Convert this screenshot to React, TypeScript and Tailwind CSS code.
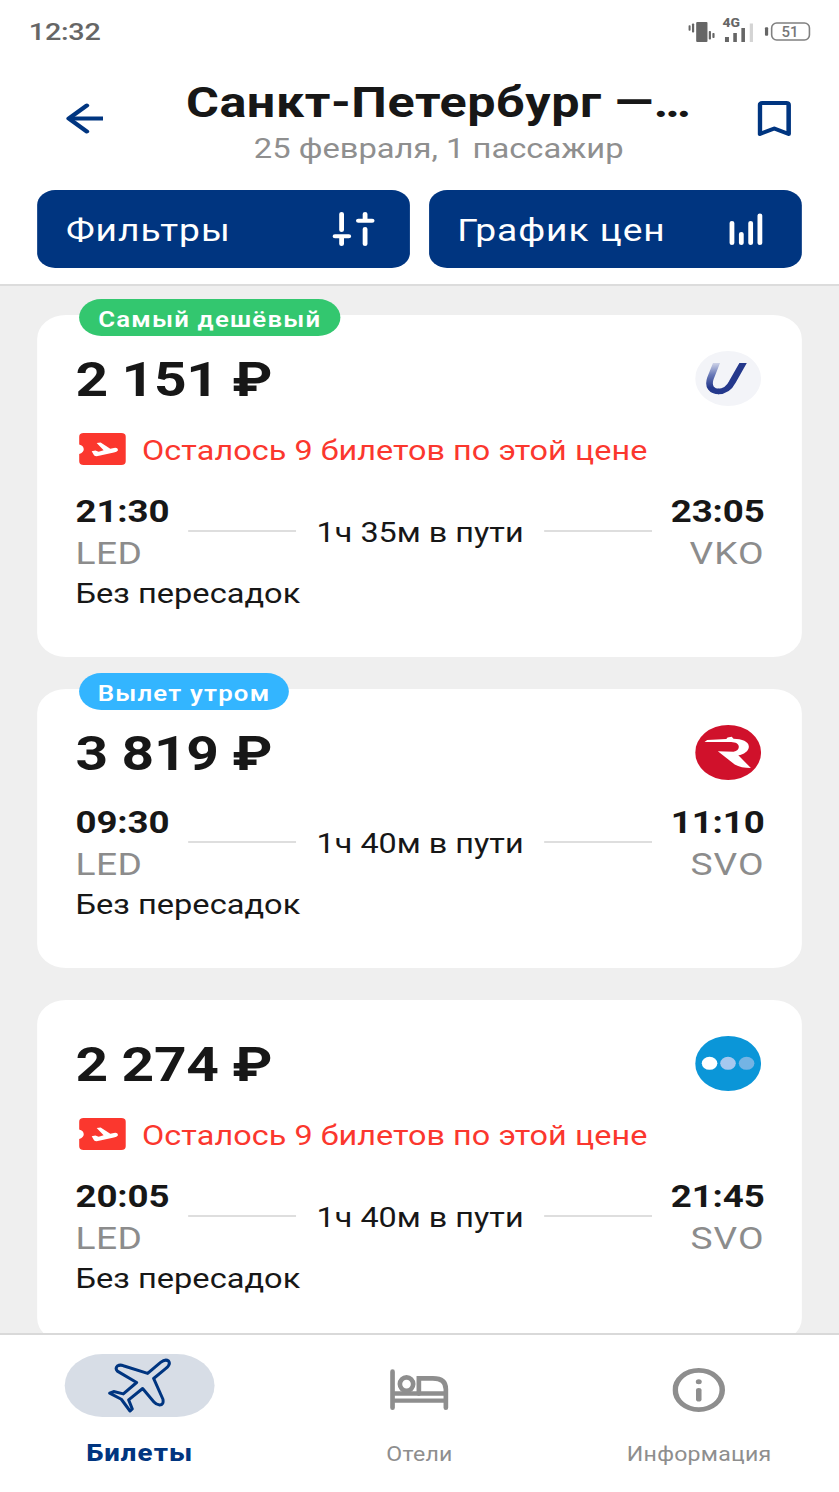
import type { ReactNode } from "react";
import clsx from "clsx";

type Flight = {
  id: number;
  price: string;
  badge?: { label: string; className: string };
  warning?: string;
  departure: string;
  arrival: string;
  from: string;
  to: string;
  duration: string;
  stops: string;
  logo: ReactNode;
};

function UtairLogo() {
  return (
    <svg viewBox="0 0 55 55" className="size-[55px]">
      <defs>
        <linearGradient id="utair" gradientUnits="userSpaceOnUse" x1="18" y1="10" x2="20" y2="36">
          <stop offset="0" stopColor="#dfe2f0" />
          <stop offset="0.5" stopColor="#6c7cb9" />
          <stop offset="1" stopColor="#24388c" />
        </linearGradient>
        <clipPath id="utair-top">
          <rect x="0" y="12" width="55" height="43" />
        </clipPath>
      </defs>
      <circle cx="27.5" cy="27.5" r="27.5" fill="#f3f4f8" />
      <g clipPath="url(#utair-top)" fill="none" strokeWidth="5.6">
        <path d="M18.8 9L12.8 27C10.2 36 14 40.5 20 40.5" stroke="url(#utair)" />
        <path d="M19 40.5C25 40.5 28.5 37 31 31L41.4 9" stroke="#24388c" />
      </g>
    </svg>
  );
}

function RossiyaLogo() {
  return (
    <svg viewBox="0 0 55 55" className="size-[55px]">
      <circle cx="27.5" cy="27.5" r="27.5" fill="#d0112b" />
      <path
        fill="#fff"
        d="M7.8 17L10 15L26 14L27 12.6L30.5 11.7L32 13.8C39 14 44.8 16.5 44.8 21.7C44.8 26 40.5 29.5 36 30.3L46.5 43C41 43 36.5 42 33 39.5L18.9 26.3L32 26.7C35 26 36.5 24 36.4 21.7C36.2 18.5 34 17.3 30 17Z"
      />
    </svg>
  );
}

function DotsLogo() {
  return (
    <svg viewBox="0 0 55 55" className="size-[55px]">
      <circle cx="27.5" cy="27.5" r="27.5" fill="#0b96d8" />
      <circle cx="12" cy="27.3" r="6.5" fill="#fff" />
      <circle cx="27.4" cy="27.3" r="6.5" fill="#a6c8ef" />
      <circle cx="42.9" cy="27.3" r="6.5" fill="#74b4e4" />
    </svg>
  );
}

function StatusIcons() {
  return (
    <svg viewBox="0 -6 123 40" preserveAspectRatio="none" className="h-10 w-[102.6px]" fill="#666">
      <rect x="0.6" y="8.2" width="2" height="5.5" rx="0.8" />
      <rect x="4" y="6.5" width="2.2" height="9" rx="0.8" />
      <rect x="8.2" y="5" width="11.3" height="20" rx="1" />
      <rect x="20.8" y="14" width="2.2" height="8.5" rx="0.8" />
      <rect x="24.4" y="16" width="2.2" height="5" rx="0.8" />
      <text x="34.5" y="10.2" fontSize="12.5" fontWeight="800" textLength="17.5" lengthAdjust="spacingAndGlyphs">
        4G
      </text>
      <rect x="37" y="20" width="4" height="5" />
      <rect x="45.3" y="16" width="3.6" height="9" />
      <rect x="53.4" y="11" width="3.6" height="14" />
      <rect x="61.8" y="6.5" width="3.2" height="18.5" fill="#d4d4d4" />
      <rect x="77" y="10.3" width="3.2" height="8.5" rx="1" />
      <rect x="83.7" y="6" width="37.8" height="17" rx="5" fill="none" stroke="#808080" strokeWidth="1.6" />
      <text x="93.5" y="19.8" fontSize="14.5" fontWeight="500" fill="#777" textLength="17" lengthAdjust="spacingAndGlyphs">
        51
      </text>
    </svg>
  );
}

function BackIcon() {
  return (
    <svg viewBox="0 0 31 33" className="h-[33px] w-[31px]" fill="none" stroke="#003580" strokeWidth="4">
      <path d="M31 16.5H3" />
      <path d="M17.4 3.5L2.4 16.5L17.4 29.5" strokeLinejoin="round" strokeLinecap="round" />
    </svg>
  );
}

function BookmarkIcon() {
  return (
    <svg viewBox="0 0 28 35" className="h-[35px] w-7" fill="none" stroke="#003580" strokeWidth="3.8">
      <path d="M2 4Q2 2 4 2H24Q26 2 26 4V33L14 27.5L2 33Z" strokeLinejoin="round" />
    </svg>
  );
}

function FiltersIcon() {
  return (
    <svg viewBox="0 0 36 36" className="size-9" fill="none" stroke="#fff" strokeWidth="4">
      <path d="M8 19V3M8 25.3V33M2.5 25.3H14M27.6 18V33M27.6 9.7V3M22 9.7H33.5" strokeLinecap="round" />
    </svg>
  );
}

function ChartIcon() {
  return (
    <svg viewBox="0 0 29 33" className="h-[33px] w-[29px]" fill="none" stroke="#fff" strokeWidth="4">
      <path d="M2.7 10V30M10.5 21V30M18.3 10V30M26 2.5V30" strokeLinecap="round" />
    </svg>
  );
}

function TicketIcon() {
  return (
    <svg viewBox="237 460 141 95" preserveAspectRatio="none" className="h-8 w-[39px]">
      <path
        fill="#fb372e"
        d="M251 460H364Q378 460 378 471V544Q378 555 364 555H251Q237 555 237 544V522Q251 518 251 508Q251 498 237 494V471Q237 460 251 460Z"
      />
      <path
        fill="#fff"
        d="M275 514L286 512L296 516L311 511L290 490L302 488L331 507L346 504Q355 505 354 512Q351 516 342 518L290 529Q284 529 282 526Z"
      />
    </svg>
  );
}

function PlaneIcon() {
  return (
    <svg
      viewBox="322 112 198 170"
      preserveAspectRatio="none"
      className="h-[57px] w-[55px]"
      fill="none"
      stroke="#003580"
      strokeWidth="9"
      strokeLinejoin="round"
    >
      <path d="M445 161L484 128Q498 117 508 124Q515 134 500 146L463 176L491 238Q494 255 481 255Q471 254 464 246L430 206L388 240L399 267L392 273L366 238L331 220L343 215L372 222L412 188L354 154Q347 146 354 139Q362 134 372 138Z" />
    </svg>
  );
}

function BedIcon() {
  return (
    <svg
      viewBox="1172 148 178 122"
      preserveAspectRatio="none"
      className="h-[41px] w-[49.5px]"
      fill="none"
      stroke="#8e8e8e"
      strokeWidth="14"
    >
      <path d="M1181 156V263M1341 263V208Q1341 176 1302 176H1260V221" strokeLinecap="round" />
      <path d="M1181 221H1340M1181 242H1340" strokeWidth="13" />
      <circle cx="1223" cy="193" r="20" />
    </svg>
  );
}

function InfoIcon() {
  return (
    <svg viewBox="0 0 44 44" className="size-11" fill="none" stroke="#8e8e8e" strokeWidth="4.6">
      <circle cx="22" cy="22" r="19.6" />
      <path d="M22 22.3V31.3" strokeLinecap="round" />
      <circle cx="22" cy="13.8" r="2.5" fill="#8e8e8e" stroke="none" />
    </svg>
  );
}

const flights: Flight[] = [
  {
    id: 1,
    price: "2 151 ₽",
    badge: { label: "Самый дешёвый", className: "bg-[#33c76f] w-[218px]" },
    warning: "Осталось 9 билетов по этой цене",
    departure: "21:30",
    arrival: "23:05",
    from: "LED",
    to: "VKO",
    duration: "1ч 35м в пути",
    stops: "Без пересадок",
    logo: <UtairLogo />,
  },
  {
    id: 2,
    price: "3 819 ₽",
    badge: { label: "Вылет утром", className: "bg-[#33b5ff] w-[175px]" },
    departure: "09:30",
    arrival: "11:10",
    from: "LED",
    to: "SVO",
    duration: "1ч 40м в пути",
    stops: "Без пересадок",
    logo: <RossiyaLogo />,
  },
  {
    id: 3,
    price: "2 274 ₽",
    warning: "Осталось 9 билетов по этой цене",
    departure: "20:05",
    arrival: "21:45",
    from: "LED",
    to: "SVO",
    duration: "1ч 40м в пути",
    stops: "Без пересадок",
    logo: <DotsLogo />,
  },
];

const tabs = [
  { label: "Билеты", icon: <PlaneIcon />, active: true },
  { label: "Отели", icon: <BedIcon />, active: false },
  { label: "Информация", icon: <InfoIcon />, active: false },
];

function FlightCard({ flight }: { flight: Flight }) {
  return (
    <article className="relative flex shrink-0 flex-col rounded-[24px] bg-white pt-9 pr-[31px] pb-[44.5px] pl-8">
      {flight.badge && (
        <span
          className={clsx(
            "absolute -top-4 left-[35px] flex h-[37px] items-center justify-center rounded-full pt-[5px] text-[21.5px] font-semibold tracking-[1px] whitespace-nowrap text-white",
            flight.badge.className,
          )}
        >
          {flight.badge.label}
        </span>
      )}
      <div className="flex h-[55px] items-center justify-between pr-[3.5px]">
        <span className="pt-[5px] text-[47.5px] leading-none font-bold tracking-[-0.3px]">{flight.price}</span>
        {flight.logo}
      </div>
      {flight.warning && (
        <div className="mt-[27px] mb-1 ml-[3px] flex h-8 items-center gap-[13.5px] text-[#fb372e]">
          <TicketIcon />
          <span className="pt-[3px] text-[27px] leading-8 tracking-[0.05px] whitespace-nowrap">{flight.warning}</span>
        </div>
      )}
      <div className="mt-[21.5px] flex items-center text-[31px] leading-[42px]">
        <div className="flex w-[78px] flex-col">
          <span className="text-[30.6px] font-bold tracking-[-0.1px]">{flight.departure}</span>
          <span className="tracking-[0.4px] text-[#8c8c8c]">{flight.from}</span>
        </div>
        <div className="flex flex-1 items-center gap-[17px] px-4">
          <div className="mb-[3px] h-[2px] flex-1 bg-[#dedede]" />
          <span className="text-[27px] whitespace-nowrap">{flight.duration}</span>
          <div className="mb-[3px] h-[2px] flex-1 bg-[#dedede]" />
        </div>
        <div className="flex w-[78px] flex-col items-end">
          <span className="text-[30.6px] font-bold tracking-[-0.1px]">{flight.arrival}</span>
          <span className="tracking-[0.9px] text-[#8c8c8c]">{flight.to}</span>
        </div>
      </div>
      <p className="text-[27.2px] leading-[38px]">{flight.stops}</p>
    </article>
  );
}

export default function App() {
  return (
    <div className="w-[839px] overflow-hidden">
      <div className="flex h-[1492px] w-[700px] origin-top-left scale-x-[1.19857] flex-col bg-white font-['Roboto',sans-serif] text-[#171717]">
        <header className="flex h-[285.5px] shrink-0 flex-col border-b-2 border-[#dcdcdc]">
          <div className="flex h-[62px] items-center justify-between pr-[23px] pl-[24px] text-[24px] text-[#666]">
            <span className="pt-0.5 font-medium tracking-[-0.2px]">12:32</span>
            <StatusIcons />
          </div>
          <div className="mt-4 flex h-[90px] items-center pr-10 pl-[55px]">
            <div className="mb-2.5">
              <BackIcon />
            </div>
            <div className="flex min-w-0 flex-1 flex-col items-center self-start pl-[14px] whitespace-nowrap">
              <h1 className="text-[42px] leading-[50px] font-bold tracking-[0.45px]">Санкт-Петербург —…</h1>
              <p className="mt-[2px] text-[27.3px] leading-[38px] text-[#8f8f8f]">25 февраля, 1 пассажир</p>
            </div>
            <div className="mb-2.5">
              <BookmarkIcon />
            </div>
          </div>
          <div className="mt-[22px] grid grid-cols-2 gap-4 px-[31px] text-[31px] tracking-[0.8px] text-white">
            <button type="button" className="flex h-[78px] items-center justify-between rounded-[15px] bg-[#003580] pr-[29px] pl-6">
              <span className="pt-1">Фильтры</span>
              <FiltersIcon />
            </button>
            <button type="button" className="flex h-[78px] items-center justify-between rounded-[15px] bg-[#003580] pr-8 pl-[23.5px]">
              <span className="pt-1">График цен</span>
              <ChartIcon />
            </button>
          </div>
        </header>

        <main className="flex min-h-0 flex-1 flex-col gap-8 overflow-hidden bg-[#efefef] px-[31px] pt-[29.5px]">
          {flights.map((flight) => (
            <FlightCard key={flight.id} flight={flight} />
          ))}
        </main>

        <nav className="grid h-[159px] shrink-0 grid-cols-3 border-t-2 border-[#d9d9d9] pt-[19px]">
          {tabs.map((tab) => (
            <button key={tab.label} type="button" className="flex flex-col items-center">
              <span
                className={clsx(
                  "flex h-[63px] w-[125px] items-center justify-center rounded-full",
                  tab.active ? "bg-[#d7dde6]" : "pt-2",
                )}
              >
                {tab.icon}
              </span>
              <span
                className={clsx(
                  "mt-5 leading-[30px]",
                  tab.active ? "pt-0.5 text-[23px] font-extrabold tracking-[1px] text-[#003580]" : "pt-[3px] text-[19.3px] tracking-[0.2px] text-[#8e8e8e]",
                )}
              >
                {tab.label}
              </span>
            </button>
          ))}
        </nav>
      </div>
    </div>
  );
}
